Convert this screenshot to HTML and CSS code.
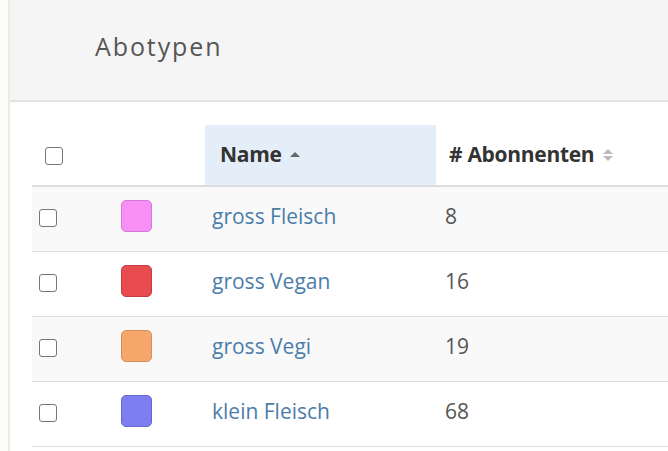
FILE: index.html
```html
<!DOCTYPE html>
<html lang="de">
<head>
<meta charset="utf-8">
<title>Abotypen</title>
<link rel="stylesheet" href="styles.css">
</head>
<body>
<div class="side"></div>
<main class="panel">
  <header class="panel-head">
    <h1 class="title">Abotypen</h1>
  </header>
  <table class="grid">
    <colgroup>
      <col class="c-check"><col class="c-color"><col class="c-name"><col class="c-count">
    </colgroup>
    <thead>
      <tr>
        <th class="th-check"><span class="cb"></span></th>
        <th></th>
        <th class="th-name sorted">Name <span class="sort-up"></span></th>
        <th class="th-count"># Abonnenten <span class="sort-both"><i class="up"></i><i class="down"></i></span></th>
      </tr>
    </thead>
    <tbody>
      <tr class="odd">
        <td class="td-check"><span class="cb"></span></td>
        <td class="td-color"><span class="swatch pink"></span></td>
        <td class="td-name"><a href="#">gross Fleisch</a></td>
        <td class="td-count">8</td>
      </tr>
      <tr>
        <td class="td-check"><span class="cb"></span></td>
        <td class="td-color"><span class="swatch red"></span></td>
        <td class="td-name"><a href="#">gross Vegan</a></td>
        <td class="td-count">16</td>
      </tr>
      <tr class="odd">
        <td class="td-check"><span class="cb"></span></td>
        <td class="td-color"><span class="swatch orange"></span></td>
        <td class="td-name"><a href="#">gross Vegi</a></td>
        <td class="td-count">19</td>
      </tr>
      <tr>
        <td class="td-check"><span class="cb"></span></td>
        <td class="td-color"><span class="swatch violet"></span></td>
        <td class="td-name"><a href="#">klein Fleisch</a></td>
        <td class="td-count">68</td>
      </tr>
    </tbody>
  </table>
</main>
</body>
</html>
```

FILE: styles.css
```css
html, body {
  margin: 0;
  padding: 0;
  height: 100%;
  overflow: hidden;
  background: #ffffff;
  font-family: "Open Sans", "DejaVu Sans", sans-serif;
}
body {
  display: flex;
}
.side {
  width: 8px;
  flex: 0 0 8px;
  background: #fcfbf8;
  border-right: 2px solid #ebebeb;
}
.panel {
  flex: 1 1 auto;
  min-width: 0;
}
.panel-head {
  height: 102px;
  background: #f5f5f5;
  border-bottom: 2px solid #e2e2e2;
  display: flex;
  align-items: center;
  padding-left: 85px;
  box-sizing: border-box;
}
.title {
  margin: 0 0 8px 0;
  font-size: 25px;
  font-weight: 400;
  letter-spacing: 1.9px;
  color: #555555;
}
.grid {
  margin: 23px 0 0 22px;
  width: 636px;
  border-collapse: collapse;
  table-layout: fixed;
}
.c-check { width: 81px; }
.c-color { width: 92px; }
.c-name { width: 231px; }
.c-count { width: auto; }
.grid th {
  height: 57px;
  padding: 0 0 3px 0;
  text-align: left;
  vertical-align: middle;
  font-size: 21px;
  font-weight: 700;
  letter-spacing: -0.3px;
  color: #333333;
  border-bottom: 2px solid #dddddd;
  white-space: nowrap;
}
.th-check { padding-left: 13px !important; }
.th-name { padding-left: 15px !important; }
.th-count { padding-left: 13px !important; }
.sorted { background: #e3eef8; }
.grid td {
  height: 57px;
  padding: 0 0 7px 0;
  vertical-align: middle;
  border-bottom: 1px solid #dddddd;
  font-size: 21px;
  color: #555555;
  white-space: nowrap;
}
.grid tr.odd td { background: #f9f9f9; }
.td-check { padding-left: 7px !important; }
.td-color { padding-left: 8px !important; }
.td-name { padding-left: 7px !important; }
.td-count { padding-left: 9px !important; }
.td-name a {
  color: #4a7daa;
  text-decoration: none;
}
.cb {
  display: inline-block;
  width: 16px;
  height: 16px;
  border: 1px solid #767676;
  border-radius: 3px;
  background: #ffffff;
  vertical-align: middle;
}
.swatch {
  display: block;
  width: 29px;
  height: 30px;
  border-radius: 5px;
  border: 1px solid;
}
.pink { background: #f78ff7; border-color: #d57ad5; }
.red { background: #e84b50; border-color: #c33d42; }
.orange { background: #f6a86c; border-color: #d88f57; }
.violet { background: #7d7ff1; border-color: #6668cf; }
.sort-up {
  display: inline-block;
  width: 0;
  height: 0;
  border-left: 5px solid transparent;
  border-right: 5px solid transparent;
  border-bottom: 5px solid #666666;
  vertical-align: middle;
  margin-left: 3px;
  margin-bottom: 2px;
}
.sort-both {
  display: inline-flex;
  flex-direction: column;
  gap: 2px;
  vertical-align: middle;
  margin-left: 3px;
  margin-bottom: 2px;
}
.sort-both i {
  display: block;
  width: 0;
  height: 0;
  border-left: 5px solid transparent;
  border-right: 5px solid transparent;
}
.sort-both .up { border-bottom: 5px solid #bbbbbb; }
.sort-both .down { border-top: 5px solid #bbbbbb; }
```
